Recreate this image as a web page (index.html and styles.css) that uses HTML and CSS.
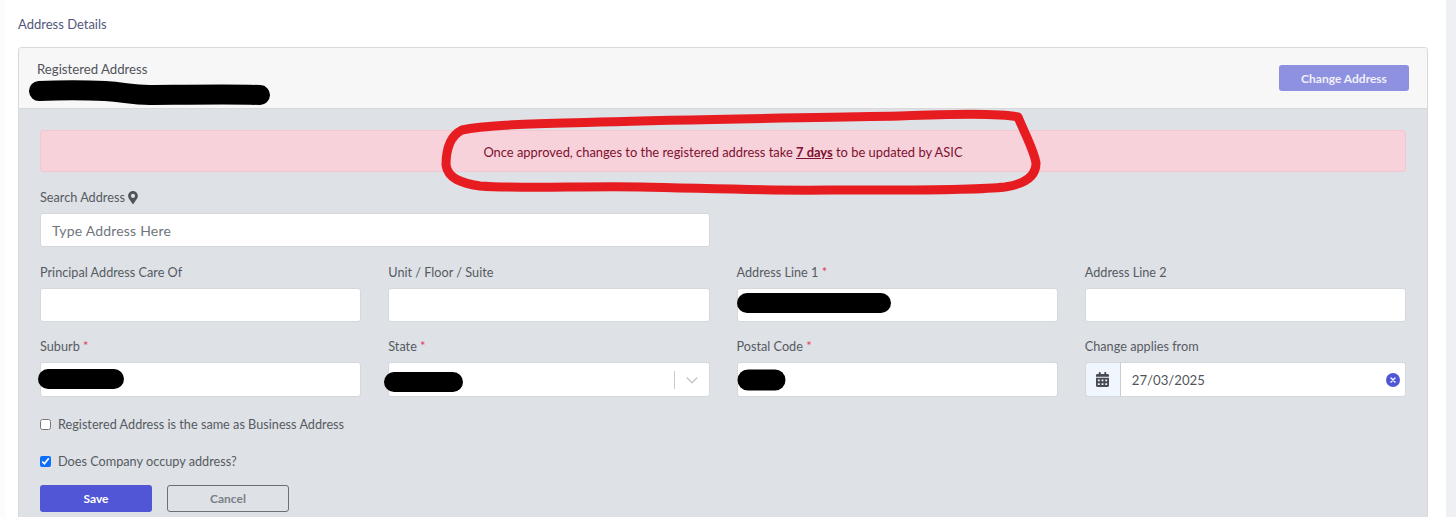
FILE: index.html
```html
<!DOCTYPE html>
<html lang="en">
<head>
<meta charset="UTF-8">
<meta name="viewport" content="width=device-width, initial-scale=1.0">
<title>Address Details</title>
<link rel="stylesheet" href="styles.css">
</head>
<body>
<div class="pagina">
    <h2 class="titulo">Address Details</h2>
    <div class="tarjeta">
        <div class="tarjeta-cabecera">
            <div class="registrado">Registered Address</div>
            <button type="button" class="btn-cambiar">Change Address</button>
        </div>
        <form class="tarjeta-cuerpo">
            <div class="alerta">Once approved, changes to the registered address take <strong>7 days</strong> to be updated by ASIC</div>

            <div class="rejilla rejilla-busqueda">
                <div class="campo campo-ancho">
                    <label for="buscar">Search Address
                        <svg class="icono-pin" viewBox="0 0 384 512" aria-hidden="true"><path d="M172 502C27 291 0 253 0 192 0 86 86 0 192 0s192 86 192 192c0 61-27 99-172 310a24 24 0 0 1-40 0zM192 272a80 80 0 1 0 0-160 80 80 0 0 0 0 160z"/></svg>
                    </label>
                    <input type="text" id="buscar" placeholder="Type Address Here">
                </div>
            </div>

            <div class="rejilla">
                <div class="campo">
                    <label for="careof">Principal Address Care Of</label>
                    <input type="text" id="careof">
                </div>
                <div class="campo">
                    <label for="unidad">Unit / Floor / Suite</label>
                    <input type="text" id="unidad">
                </div>
                <div class="campo">
                    <label for="linea1">Address Line 1 <span class="req">*</span></label>
                    <input type="text" id="linea1">
                </div>
                <div class="campo">
                    <label for="linea2">Address Line 2</label>
                    <input type="text" id="linea2">
                </div>
            </div>

            <div class="rejilla rejilla-segunda">
                <div class="campo">
                    <label for="suburbio">Suburb <span class="req">*</span></label>
                    <input type="text" id="suburbio">
                </div>
                <div class="campo">
                    <label>State <span class="req">*</span></label>
                    <div class="selector">
                        <span class="selector-sep"></span>
                        <svg class="selector-flecha" viewBox="0 0 20 20" aria-hidden="true"><path d="M3.500 7 10 13.500 16.500 7" fill="none" stroke="#c4c7cc" stroke-width="1.800"/></svg>
                    </div>
                </div>
                <div class="campo">
                    <label for="postal">Postal Code <span class="req">*</span></label>
                    <input type="text" id="postal">
                </div>
                <div class="campo">
                    <label for="fecha">Change applies from</label>
                    <div class="grupo-fecha">
                        <span class="fecha-icono">
                            <svg viewBox="0 0 448 512" aria-hidden="true"><path d="M0 464c0 27 21 48 48 48h352c27 0 48-21 48-48V192H0v272zm320-196c0-7 5-12 12-12h40c7 0 12 5 12 12v40c0 7-5 12-12 12h-40c-7 0-12-5-12-12v-40zm0 128c0-7 5-12 12-12h40c7 0 12 5 12 12v40c0 7-5 12-12 12h-40c-7 0-12-5-12-12v-40zM192 268c0-7 5-12 12-12h40c7 0 12 5 12 12v40c0 7-5 12-12 12h-40c-7 0-12-5-12-12v-40zm0 128c0-7 5-12 12-12h40c7 0 12 5 12 12v40c0 7-5 12-12 12h-40c-7 0-12-5-12-12v-40zM64 268c0-7 5-12 12-12h40c7 0 12 5 12 12v40c0 7-5 12-12 12H76c-7 0-12-5-12-12v-40zm0 128c0-7 5-12 12-12h40c7 0 12 5 12 12v40c0 7-5 12-12 12H76c-7 0-12-5-12-12v-40zM400 64h-48V16c0-9-7-16-16-16h-32c-9 0-16 7-16 16v48H160V16c0-9-7-16-16-16h-32c-9 0-16 7-16 16v48H48C21 64 0 85 0 112v48h448v-48c0-27-21-48-48-48z"/></svg>
                        </span>
                        <input type="text" id="fecha" value="27/03/2025">
                        <svg class="fecha-limpiar" viewBox="0 0 14 14" aria-hidden="true"><circle cx="7" cy="7" r="7" fill="#5156d6"/><path d="M5 5l4 4M9 5l-4 4" stroke="#fff" stroke-width="1.400" stroke-linecap="round"/></svg>
                    </div>
                </div>
            </div>

            <label class="casilla casilla-primera"><input type="checkbox"> Registered Address is the same as Business Address</label>
            <label class="casilla casilla-segunda"><input type="checkbox" checked> Does Company occupy address?</label>

            <div class="acciones">
                <button type="submit" class="btn-guardar">Save</button>
                <button type="button" class="btn-cancelar">Cancel</button>
            </div>
        </form>
    </div>
</div>

<!-- marcas hechas a mano encima de la captura -->
<svg class="marcas" viewBox="0 0 1456 517" aria-hidden="true">
    <g fill="none" stroke="#000" stroke-linecap="round" stroke-linejoin="round">
        <path stroke-width="20" d="M39 91C60 90 85 90 105 91S130 95 150 95 230 94 260 95"/>
        <path stroke-width="20" d="M747 303H881"/>
        <path stroke-width="20" d="M48 379H114"/>
        <path stroke-width="20" d="M394 382H453"/>
        <path stroke-width="21" d="M748 380H775"/>
    </g>
    <path fill="none" stroke="#e71c21" stroke-width="9" stroke-linecap="round" stroke-linejoin="round" d="M1018 117C1000 113 950 114 900 116C800 118 700 119 600 122C540 124 490 124 462 130C450 136 446 150 446 165C448 178 460 183 480 186C520 189 580 186 640 187C700 188 760 191 830 190C900 190 970 191 1005 187C1025 184 1036 176 1036 163C1034 150 1024 132 1018 117Z"/>
</svg>
</body>
</html>
```

FILE: styles.css
```css
* {
    box-sizing: border-box;
}
body {
    font-family: "Lato", "Open Sans", sans-serif;
    font-size: 12.7px;
    color: #565b62;
    margin: 0;
    padding: 0 10px 0 0;
    background-color: #eef0f4;
    position: relative;
}
.pagina {
    background-color: #fff;
    border-left: 5px solid #fbfbfb;
    padding: 16px 18px 0 13px;
}
.titulo {
    font-size: 13px;
    font-weight: 400;
    line-height: 16px;
    color: #54577c;
    margin: 0 0 15px;
}
.tarjeta {
    border: 1px solid #d9d9d9;
    border-bottom: none;
    border-radius: 4px 4px 0 0;
    overflow: hidden;
}
.tarjeta-cabecera {
    height: 61px;
    background-color: #f7f7f8;
    border-bottom: 1px solid #d9d9d9;
    padding: 13px 18px;
    display: flex;
    justify-content: space-between;
    align-items: flex-start;
}
.registrado {
    font-size: 13.200px;
    line-height: 16px;
    color: #4f545a;
}
.btn-cambiar {
    width: 130px;
    height: 26px;
    margin-top: 4px;
    background-color: #8e90e0;
    color: #f1f1fb;
    border: none;
    border-radius: 3px;
    font: 700 12px "Lato", sans-serif;
}
.tarjeta-cuerpo {
    background-color: #dee1e6;
    padding: 21px 21px 5px;
}
.alerta {
    height: 42px;
    padding-top: 2px;
    background-color: #f8d2da;
    border: 1px solid #f3c6d0;
    border-radius: 3px;
    color: #7d1030;
    font-size: 12.900px;
    display: flex;
    align-items: center;
    justify-content: center;
    white-space: pre-wrap;
}
.alerta strong {
    text-decoration: underline;
}
.rejilla {
    display: grid;
    grid-template-columns: repeat(4, 1fr);
    column-gap: 27px;
    margin-top: 17px;
}
.rejilla-segunda {
    margin-top: 16px;
}
.campo-ancho {
    grid-column: span 2;
}
.campo label {
    display: block;
    line-height: 16px;
    margin-bottom: 8px;
}
.req {
    color: #e0405f;
}
.icono-pin {
    width: 10px;
    height: 13px;
    fill: #50555c;
    vertical-align: -2px;
}
input[type="text"] {
    display: block;
    width: 100%;
    height: 34px;
    padding: 0 11px;
    border: 1px solid #d4d7dc;
    border-radius: 3px;
    background-color: #fff;
    font: 14px "Lato", sans-serif;
    letter-spacing: 0.2px;
    color: #50555c;
}
input::placeholder {
    color: #70757c;
    opacity: 1;
}
.rejilla-segunda input[type="text"] {
    height: 35px;
}
.selector {
    height: 35px;
    background-color: #fff;
    border: 1px solid #d4d7dc;
    border-radius: 3px;
    display: flex;
    align-items: center;
    justify-content: flex-end;
}
.selector-sep {
    width: 1px;
    height: 18px;
    background-color: #c9ccd1;
}
.selector-flecha {
    width: 16px;
    height: 16px;
    margin: 0 9px;
}
.grupo-fecha {
    height: 35px;
    display: flex;
    position: relative;
}
.fecha-icono {
    width: 36px;
    flex-shrink: 0;
    background-color: #eff6fd;
    border: 1px solid #d4d7dc;
    border-right-color: #c9ccd1;
    border-radius: 3px 0 0 3px;
    display: flex;
    align-items: center;
    justify-content: center;
}
.fecha-icono svg {
    width: 13px;
    height: 15px;
    fill: #484c52;
}
.grupo-fecha input[type="text"] {
    border-left: none;
    border-radius: 0 3px 3px 0;
    font-size: 13.200px;
    letter-spacing: 0;
}
.fecha-limpiar {
    position: absolute;
    right: 6px;
    top: 11px;
    width: 14px;
    height: 14px;
}
.casilla {
    display: flex;
    align-items: center;
    line-height: 16px;
}
.casilla input {
    width: 11px;
    height: 11px;
    margin: 0 7px 0 0;
    accent-color: #0d6efd;
}
.casilla-primera {
    margin-top: 19px;
}
.casilla-segunda {
    margin-top: 21px;
}
.acciones {
    display: flex;
    gap: 15px;
    margin-top: 16px;
}
.btn-guardar, .btn-cancelar {
    height: 27px;
    border-radius: 3px;
    font: 700 12px "Lato", sans-serif;
}
.btn-guardar {
    width: 112px;
    background-color: #5156d6;
    color: #fff;
    border: none;
}
.btn-cancelar {
    width: 122px;
    background-color: transparent;
    color: #7a7f86;
    border: 1px solid #6b7077;
}
.marcas {
    position: absolute;
    left: 0;
    top: 0;
    width: 1456px;
    height: 517px;
    pointer-events: none;
}
```
